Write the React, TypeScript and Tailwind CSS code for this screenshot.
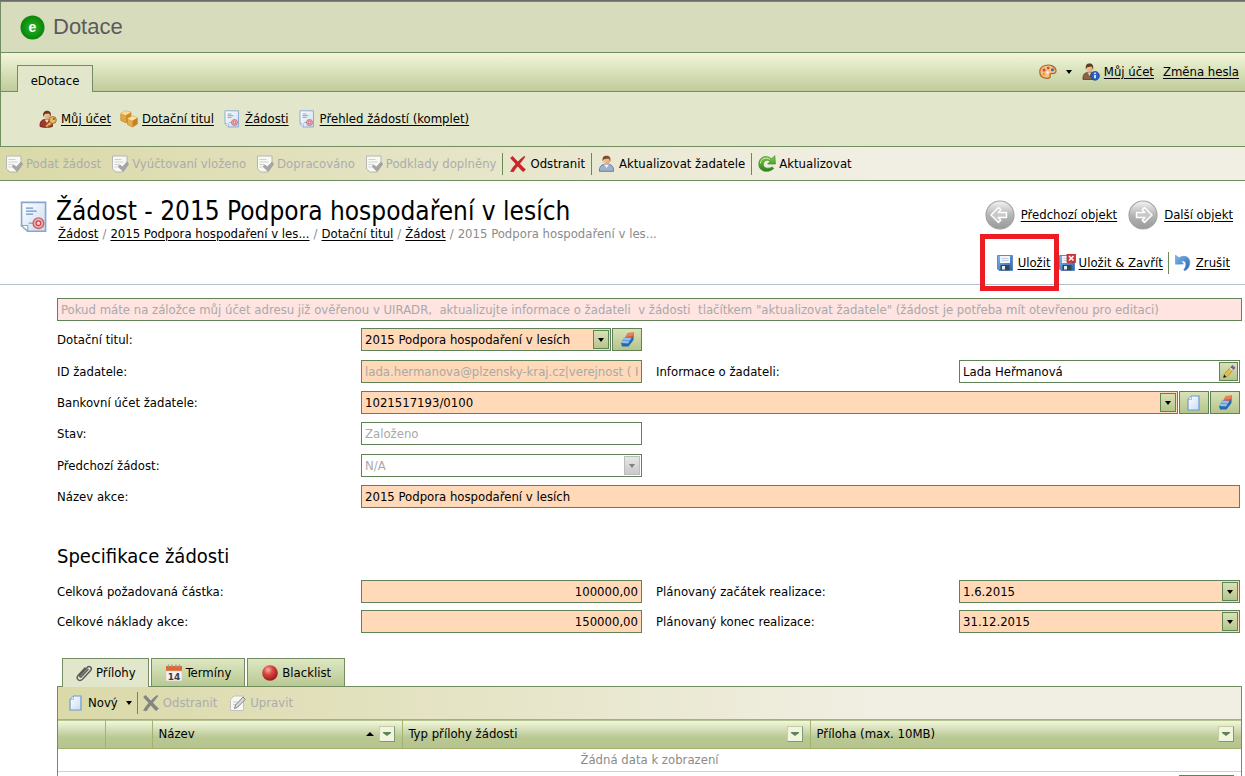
import { type ReactNode, type SelectHTMLAttributes, type InputHTMLAttributes } from "react";

type IconProps = { className?: string };

function Svg({ size = 18, box = 18, className = "", children }: { size?: number; box?: number; className?: string; children: ReactNode }) {
    return (
        <svg width={size} height={size} viewBox={`0 0 ${box} ${box}`} className={`shrink-0 ${className}`} fill="none" aria-hidden="true">
            {children}
        </svg>
    );
}

// gradients shared by all icons
function IconDefs() {
    return (
        <svg width="0" height="0" className="absolute" aria-hidden="true">
            <defs>
                <radialGradient id="logo" cx="50%" cy="50%" r="50%">
                    <stop offset="0" stopColor="#2bb32b" />
                    <stop offset="1" stopColor="#068606" />
                </radialGradient>
                <linearGradient id="page" x1="0" y1="0" x2="1" y2="1">
                    <stop offset="0" stopColor="#ffffff" />
                    <stop offset="1" stopColor="#c9dcf0" />
                </linearGradient>
                <linearGradient id="silver" x1="0" y1="0" x2="0" y2="1">
                    <stop offset="0" stopColor="#f4f4f4" />
                    <stop offset="0.5" stopColor="#b5b5b5" />
                    <stop offset="1" stopColor="#9a9a9a" />
                </linearGradient>
                <radialGradient id="ball" cx="38%" cy="30%" r="65%">
                    <stop offset="0" stopColor="#f9b0a6" />
                    <stop offset="0.45" stopColor="#d94a43" />
                    <stop offset="1" stopColor="#a51d22" />
                </radialGradient>
                <linearGradient id="leaf" x1="0" y1="0" x2="0" y2="1">
                    <stop offset="0" stopColor="#7fd04a" />
                    <stop offset="1" stopColor="#2f7d1c" />
                </linearGradient>
                <linearGradient id="sky" x1="0" y1="0" x2="1" y2="1">
                    <stop offset="0" stopColor="#7db8ef" />
                    <stop offset="1" stopColor="#2a62ad" />
                </linearGradient>
                <linearGradient id="skin" x1="0" y1="0" x2="1" y2="1">
                    <stop offset="0" stopColor="#fbe0c0" />
                    <stop offset="1" stopColor="#d69a62" />
                </linearGradient>
            </defs>
        </svg>
    );
}

function UserKeyIcon() {
    return (
        <Svg>
            <path d="M1 16.500c-.4-4 1-6.200 4-7h5c2.500.8 3.500 2.500 3.500 7-3 1.200-9.500 1.200-12.500 0z" fill="#a3352b" stroke="#6e1f1a" strokeWidth=".8" />
            <path d="M5.500 9.500 8 13l2-3.500z" fill="#f2dcc4" />
            <ellipse cx="8" cy="5.500" rx="3.200" ry="4" fill="url(#skin)" />
            <path d="M4.300 7C3.500 3 5 .7 8 .7c3.300 0 4.500 2.200 3.700 6-.6-1.500-.7-2.700-2.200-3.200-2 .2-3.600.3-4.200 1.200z" fill="#6d3520" />
            <path d="m11.500 11-5 4.700.6 1.500h2l.3-1.500h1.400l2.800-2.700" fill="#e8b45a" stroke="#8d5c18" strokeWidth=".7" />
            <circle cx="13.800" cy="10" r="3.500" fill="#eabb62" stroke="#8d5c18" strokeWidth=".8" />
            <circle cx="14.800" cy="9" r="1.100" fill="#8d5c18" />
        </Svg>
    );
}

function BoxesIcon() {
    return (
        <Svg>
            <path d="M.8 3.500 5.500.8l5.500 1.700v6.800L6 13 .8 10.500z" fill="#e3a544" stroke="#c08a3c" strokeWidth=".7" strokeLinejoin="round" />
            <path d="M.8 3.500 5.500.8l5.500 1.700-5 2.800z" fill="#fbdc98" />
            <path d="M6 5.300 11 2.500v6.800L6 13z" fill="#cf8c2f" />
            <path d="m7.500 8.500 5-2.500 4.800 2v6L12.500 17l-5-2.500z" fill="#e7ac4c" stroke="#c08a3c" strokeWidth=".7" strokeLinejoin="round" />
            <path d="M7.500 8.500 12.500 6l4.800 2-4.800 2.800z" fill="#fde2a4" />
            <path d="M12.500 10.800 17.300 8v6l-4.800 3z" fill="#c68026" />
        </Svg>
    );
}

function CertificateIcon({ size = 18 }: { size?: number }) {
    return (
        <Svg size={size}>
            <path d="M2 .800h13.500v16.200H5.500L2 13.800z" fill="url(#page)" stroke="#86a6ce" strokeWidth=".9" />
            <path d="M2 13.800h3.500V17z" fill="#fff" stroke="#86a6ce" strokeWidth=".6" />
            <path d="M4.500 4h4M4.500 5.700h6M4.500 7.400h4" stroke="#6f94c8" strokeWidth=".8" />
            <path d="M6 12.500h3.500" stroke="#8fa9cc" strokeWidth=".8" />
            <circle cx="11.500" cy="12.500" r="3" fill="#ecb0b3" stroke="#cf6168" strokeWidth=".8" />
            <circle cx="11.500" cy="12.500" r="1.300" fill="#f6dada" stroke="#c84850" strokeWidth=".7" />
        </Svg>
    );
}

function DocCheckIcon() {
    return (
        <Svg>
            <path d="M1.500 1h14.500v10l-4 6H5l-3.500-3z" fill="#f8f8f5" stroke="#b6b6b2" strokeWidth="1" />
            <path d="M3.500 4.500h7M3.500 7h9M3.500 9.500h5M3.500 12h3" stroke="#d0d0cd" strokeWidth="1" />
            <path d="m7 11.500 2-1.500 2.300 2L16 7l1.500 2.300-5.500 7z" fill="#a7a7a7" stroke="#8f8f8f" strokeWidth=".6" />
        </Svg>
    );
}

function CrossIcon({ muted = false }: { muted?: boolean }) {
    return (
        <Svg>
            <path
                d="M1.500 3 3.600 1.300Q6.500 4.800 9 7q3-3.600 6.300-5.700L16 2q-2.600 3.100-5.300 6.800 2.700 3.200 5.800 5.700L14 16.700Q11 13.700 8.700 11q-2.600 3-4.200 5.700L1.500 16.500Q3.700 12.200 6.900 8.900 4 6 1.500 3z"
                fill={muted ? "#858585" : "#cf232a"}
                stroke={muted ? "#777" : "#a3151b"}
                strokeWidth=".5"
            />
        </Svg>
    );
}

function PersonIcon() {
    return (
        <Svg>
            <path d="M1.500 16.300c-.3-4 1.200-6.300 5-7h4c3.800.7 5.300 3 5 7z" fill="#9db1cc" stroke="#5d7497" strokeWidth=".9" />
            <path d="M6 9.500 8.500 13 11 9.500z" fill="#f0f3f8" />
            <ellipse cx="8.500" cy="5.600" rx="3.300" ry="4" fill="url(#skin)" />
            <path d="M4.700 6.500C4 2.500 5.500.8 8.500.8s4.500 1.700 3.800 5.700c-.8-1-.8-2.500-1.800-3-2 .5-4.300.3-5 1.200z" fill="#7d4c2a" />
        </Svg>
    );
}

function UserInfoIcon() {
    return (
        <Svg>
            <path d="M1 16.500c-.3-4.300 1-6.500 4.500-7h4c3 .5 4 3 4 7z" fill="#8a6442" stroke="#5c3f27" strokeWidth=".8" />
            <path d="M5.500 9.500 7.500 13l2-3.500z" fill="#e3cdb3" />
            <ellipse cx="7.500" cy="5.500" rx="3.200" ry="4" fill="url(#skin)" />
            <path d="M3.900 6.500C3.200 2.500 4.700.6 7.500.6s4.300 1.900 3.600 5.900c-.8-1-.8-2.500-1.600-3-2 .5-4 .3-4.700 1.200z" fill="#5f3b22" />
            <circle cx="13" cy="12.800" r="4.400" fill="#2860c4" stroke="#153f8f" strokeWidth=".7" />
            <path d="M13 12v3.200" stroke="#fff" strokeWidth="1.600" />
            <circle cx="13" cy="10.300" r=".9" fill="#fff" />
        </Svg>
    );
}

function RefreshIcon() {
    return (
        <Svg>
            <path d="M13.500 3.800 16.800.8l.6 8.200h-7.800l2.600-2.800C9 3.800 5.300 5.800 5.300 9.400c0 3.700 4.600 4.900 8.900 2.600l1.600 1.400C10.500 18.600.8 16.800.8 9.300.8 1.700 8.500-.7 13.500 3.800z" fill="url(#leaf)" stroke="#3d8a2c" strokeWidth=".7" />
            <path d="M2.300 8.500C3 3.500 8 1.500 12 4.500" stroke="#c9efae" strokeWidth="1" />
        </Svg>
    );
}

function PaletteIcon() {
    return (
        <Svg>
            <path d="M6 2.500c5-1.500 10.500.8 11 5 .3 2.500-1.800 3.300-3.800 3-2-.2-2.500.8-2 2.200.5 1.800-1 2.800-3.500 2.600C3.300 15 .8 12.500.8 9c0-3 2-5.600 5.200-6.500z" fill="#f5c085" stroke="#ad6526" strokeWidth="1.200" />
            <circle cx="5" cy="7" r="1.500" fill="#d8432e" />
            <circle cx="9.200" cy="5" r="1.300" fill="#d8432e" />
            <circle cx="13.500" cy="6.800" r="1.500" fill="#3465c4" />
            <circle cx="4.800" cy="11" r="1.300" fill="#e7962b" />
            <circle cx="8.600" cy="9.500" r="1.200" fill="#fff4e2" />
        </Svg>
    );
}

function ArrowCircleIcon({ next = false }: { next?: boolean }) {
    return (
        <Svg size={32} box={32}>
            <circle cx="16" cy="16" r="14" fill="url(#silver)" stroke="#a4a4a4" strokeWidth="1.200" />
            <path
                d={next ? "M17.500 8.500 25 16l-7.500 7.500-2.300-2.300 2.500-2.700H9.500v-5h8.200l-2.500-2.700z" : "M14.500 8.500 7 16l7.500 7.500 2.300-2.300-2.500-2.700h8.200v-5h-8.200l2.500-2.700z"}
                fill="#c9c9c9"
                stroke="#fff"
                strokeWidth="1.500"
                strokeLinejoin="round"
            />
        </Svg>
    );
}

function FloppyIcon({ closing = false }: { closing?: boolean }) {
    return (
        <Svg>
            <path d="M1.500 1.500h15v15H3L1.500 15z" fill="url(#sky)" stroke="#5585bd" strokeWidth=".9" />
            <path d="M4 2h10v7H4z" fill="#f1f5fa" />
            <path d="M5.500 4.500h7M5.500 6.500h7" stroke="#b7c5d8" strokeWidth=".8" />
            <path d="M4.500 11h9v5.300h-9z" fill="#39424f" />
            <path d="M6 12h3v3.500H6z" fill="#e8edf3" />
            {closing && (
                <>
                    <path d="M9 0h8.500v8.500H9z" fill="#d2383a" stroke="#a82226" strokeWidth=".7" />
                    <path d="m11 2 4.500 4.500m0-4.500L11 6.500" stroke="#fff" strokeWidth="1.500" />
                </>
            )}
        </Svg>
    );
}

function UndoIcon() {
    return (
        <Svg>
            <path d="M1.500 1.200 5 3.800C11 .5 15.800 3 15.800 8.500c0 3.500-1.500 6.300-4.800 8.300l-1.300-.8c2-3 2.600-5.500 1.800-7.300C10.700 7 9.200 6.800 7.300 7.300L9.500 10l-8 .2z" fill="url(#sky)" stroke="#5b94d4" strokeWidth=".6" />
        </Svg>
    );
}

function EraserIcon() {
    return (
        <Svg>
            <path d="m8 5 1.800-3 6.200-.5-.5 4.500-2 3.500L7 7z" fill="#dd5a34" />
            <path d="M9.800 2 16 1.500 14 5l-6 .5z" fill="#e9825c" />
            <path d="m6.500 6.500 7 .5 2-2v4l-5 6.500H4L3 12z" fill="#2a66b0" />
            <path d="m6.500 6.500 7 .5-3.500 5.500-7-.5z" fill="#8cc3ee" />
            <path d="m5 9.300 7 .5" stroke="#4d90d0" strokeWidth=".8" />
        </Svg>
    );
}

function NewDocIcon() {
    return (
        <Svg>
            <path d="M6.500 2H14v14H3V5.500z" fill="url(#page)" stroke="#6b9bd1" strokeWidth="1.200" />
            <path d="M6.500 2v3.500H3z" fill="#fff" stroke="#86aedb" strokeWidth=".8" />
        </Svg>
    );
}

function PencilIcon() {
    return (
        <Svg size={14}>
            <path d="m3 12 8.500-9.500 3.500 3L6.500 15 2 16.500z" fill="#e6bf4a" stroke="#8a6d20" strokeWidth=".7" />
            <path d="m11.500 2.500 2-1.800 3.300 2.800-1.800 2z" fill="#7e59b5" stroke="#523285" strokeWidth=".6" />
            <path d="m10.500 3.700 3.300 3" stroke="#dbe1ea" strokeWidth="1.500" />
            <path d="m3 12.500-1.500 4 4-1.500z" fill="#111" />
        </Svg>
    );
}

function PaperclipIcon() {
    return (
        <Svg>
            <path
                d="M13 5.500 6.300 12.700c-.8.9-2.200-.2-1.300-1.300l7.300-8c2-2 5.300.4 3.500 2.900l-8.300 9C4.500 18 .5 15 3 11.600L10 4"
                stroke="#5c5c5c"
                strokeWidth="1.500"
                strokeLinecap="round"
            />
        </Svg>
    );
}

function CalendarIcon() {
    return (
        <Svg>
            <path d="M1 2h16v5H1z" fill="#e0672c" />
            <path d="M1 7h16v10H1z" fill="#f3f3f3" stroke="#c9c9c9" strokeWidth=".6" />
            <path d="M3.500.5v3M7 .5v3M11 .5v3M14.500.5v3" stroke="#9b9b9b" strokeWidth="1.300" />
            <text x="9" y="16" textAnchor="middle" fontSize="9" fontWeight="bold" fontFamily="DejaVu Sans, sans-serif" fill="#3d3d3d">14</text>
        </Svg>
    );
}

function BallIcon() {
    return (
        <Svg>
            <circle cx="9" cy="9" r="7.800" fill="url(#ball)" />
        </Svg>
    );
}

function EditDocIcon() {
    return (
        <Svg>
            <path d="M5 2h9.500v14.500h-13V5.500z" fill="#f7f7f4" stroke="#c2c2be" strokeWidth="1" />
            <path d="M4 8h5M4 10.500h3" stroke="#d0d0cd" strokeWidth="1" />
            <path d="m6.500 11 7.500-8 2.300 2.300-7.800 8-3 1.200z" fill="#d8d8d8" stroke="#7c7c7c" strokeWidth=".9" />
        </Svg>
    );
}

function Caret({ up = false, className = "text-black" }: IconProps & { up?: boolean }) {
    return (
        <svg width="8" height="4" viewBox="0 0 8 4" className={`shrink-0 ${className}`} aria-hidden="true">
            <path d={up ? "M0 4h8L4 0z" : "M1 0h6L4 4z"} fill="currentColor" />
        </svg>
    );
}

function TextLink({ children, icon, className = "gap-1" }: { children: ReactNode; icon?: ReactNode; className?: string }) {
    return (
        <a href="#" className={`flex items-center whitespace-nowrap ${className}`}>
            {icon}
            <span className="underline underline-offset-2">{children}</span>
        </a>
    );
}

function ToolButton({ icon, children, disabled }: { icon: ReactNode; children: ReactNode; disabled?: boolean }) {
    return (
        <button type="button" disabled={disabled} className="flex items-center gap-[3px] whitespace-nowrap disabled:text-[#acacac]">
            {icon}
            {children}
        </button>
    );
}

function Divider() {
    return <span className="h-[22px] w-px bg-[#6a8a5a]" />;
}

function IconButton({ label, children }: { label: string; children: ReactNode }) {
    return (
        <button type="button" aria-label={label} className="flex h-[23px] w-[30px] shrink-0 items-center justify-center border border-[#5f8257] bg-linear-to-b from-[#d8e2b4] to-[#b5c58d]">
            {children}
        </button>
    );
}

function TextField({ className = "bg-[#ffd9b8]", ...props }: InputHTMLAttributes<HTMLInputElement>) {
    return <input type="text" className={`h-[23px] w-full min-w-0 border border-[#5f8257] px-[3px] outline-none disabled:text-[#a9a9a9] ${className}`} {...props} />;
}

function SelectField({ className = "bg-[#ffd9b8]", disabled, value, ...props }: SelectHTMLAttributes<HTMLSelectElement> & { value: string }) {
    return (
        <div className={`flex h-[23px] w-full min-w-0 border border-[#5f8257] p-px ${className}`}>
            <select defaultValue={value} disabled={disabled} className="min-w-0 flex-1 appearance-none bg-transparent px-[2px] opacity-100 outline-none disabled:text-[#a9a9a9]" {...props}>
                <option>{value}</option>
            </select>
            {disabled ? (
                <span className="flex w-4 items-center justify-center border border-[#bdbdbd] bg-linear-to-b from-[#e6e6e6] to-[#c9c9c9]">
                    <Caret className="text-[#808080]" />
                </span>
            ) : (
                <span className="flex w-4 items-center justify-center border border-[#5f8257] bg-linear-to-b from-[#d8e2b4] to-[#b5c58d]">
                    <Caret />
                </span>
            )}
        </div>
    );
}

function DateField({ id, value }: { id: string; value: string }) {
    return (
        <div className="flex h-[23px] w-full min-w-0 border border-[#5f8257] bg-[#ffd9b8] p-px">
            <input id={id} type="text" defaultValue={value} className="min-w-0 flex-1 px-[2px] outline-none" />
            <button type="button" aria-label="Vybrat datum" className="flex w-4 items-center justify-center border border-[#5f8257] bg-linear-to-b from-[#d8e2b4] to-[#b5c58d]">
                <Caret />
            </button>
        </div>
    );
}

function Row({ children }: { children: ReactNode }) {
    return <div className="grid grid-cols-[304px_1fr_317px_1fr] items-center">{children}</div>;
}

function Label({ htmlFor, second, children }: { htmlFor: string; second?: boolean; children: ReactNode }) {
    return (
        <label htmlFor={htmlFor} className={second ? "pl-[14px]" : ""}>
            {children}
        </label>
    );
}

function FilterButton({ column }: { column: string }) {
    return (
        <button type="button" aria-label={`Filtr: ${column}`} className="flex size-4 shrink-0 items-center justify-center border border-[#c3d0a6] border-r-[#7d9a72] border-b-[#7d9a72] bg-[#f1f5de]">
            <svg width="8" height="4" viewBox="0 0 8 4" aria-hidden="true">
                <path d="M0 0h8v1L4 4 0 1z" fill="#5f8257" />
            </svg>
        </button>
    );
}

function HeaderCell({ title, sorted }: { title: string; sorted?: boolean }) {
    return (
        <th className="border-r border-[#a3b26c] p-0 pr-[7px] pl-[6px] text-left font-normal last:border-r-0">
            <div className="flex items-center gap-[5px]">
                <span className="flex-1">{title}</span>
                {sorted && <Caret up />}
                <FilterButton column={title} />
            </div>
        </th>
    );
}

const workflow = ["Podat žádost", "Vyúčtovaní vloženo", "Dopracováno", "Podklady doplněny"];

export default function App() {
    return (
        <div className="flex min-h-screen flex-col overflow-hidden bg-white font-['DejaVu_Sans_Condensed','DejaVu_Sans',sans-serif] text-[13px] leading-4 text-black">
            <IconDefs />

            <header className="border-t border-[#6b6b6b]">
                <div className="border-y border-l border-[#728d5f] bg-[#d7dcbc]">
                    <div className="flex h-[50px] items-center gap-2 pl-[19px] font-['Liberation_Sans',Arial,sans-serif]">
                        <svg width="25" height="25" viewBox="0 0 25 25" aria-hidden="true">
                            <circle cx="12.500" cy="12.500" r="12" fill="url(#logo)" />
                            <text x="12.500" y="16.500" textAnchor="middle" fontSize="14" fontWeight="bold" fill="#fff">e</text>
                        </svg>
                        <span className="text-[22px] leading-6 text-[#5b5b5f]">Dotace</span>
                    </div>
                </div>

                <div className="flex h-[38px] items-end justify-between border-l border-[#728d5f] bg-linear-to-b from-[#f2f6dc] to-[#bfcc99] pr-[6px] pl-4">
                    <div role="tablist" className="relative -mb-px">
                        <button type="button" role="tab" aria-selected="true" className="h-[27px] w-[76px] border border-b-0 border-[#728d5f] bg-[#e2e7cb] pt-1">
                            eDotace
                        </button>
                    </div>
                    <div className="flex items-center gap-[9px] pb-[10px]">
                        <button type="button" aria-label="Vzhled" className="flex items-center gap-2">
                            <PaletteIcon />
                            <Caret />
                        </button>
                        <TextLink icon={<UserInfoIcon />}>Můj účet</TextLink>
                        <TextLink>Změna hesla</TextLink>
                    </div>
                </div>

                <nav className="flex h-14 items-center gap-[9px] border-y border-l border-[#728d5f] bg-[#e2e7cb] pl-[38px]">
                    <TextLink icon={<UserKeyIcon />}>Můj účet</TextLink>
                    <TextLink icon={<BoxesIcon />}>Dotační titul</TextLink>
                    <TextLink icon={<CertificateIcon />}>Žádosti</TextLink>
                    <TextLink icon={<CertificateIcon />}>Přehled žádostí (komplet)</TextLink>
                </nav>
            </header>

            <div role="toolbar" className="flex h-[34px] items-center gap-[6px] border-b border-[#728d5f] bg-linear-to-r from-[#dad9a8] to-[#f1efe3] to-70% pl-[5px]">
                <div className="flex gap-[10px]">
                    {workflow.map((step) => (
                        <ToolButton key={step} icon={<DocCheckIcon />} disabled>
                            {step}
                        </ToolButton>
                    ))}
                </div>
                <Divider />
                <ToolButton icon={<CrossIcon />}>Odstranit</ToolButton>
                <Divider />
                <ToolButton icon={<PersonIcon />}>Aktualizovat žadatele</ToolButton>
                <Divider />
                <ToolButton icon={<RefreshIcon />}>Aktualizovat</ToolButton>
            </div>

            <section className="flex h-[104px] items-start border-b border-[#b4bfcc] pl-[18px]">
                <div className="pt-5">
                    <CertificateIcon size={32} />
                </div>
                <div className="flex-1 pt-[15px] pl-[6px]">
                    <h1 className="text-[26px] leading-[30px]">Žádost - 2015 Podpora hospodaření v lesích</h1>
                    <div className="flex gap-1 pl-[2px] text-[#8b8b8b]">
                        <a href="#" className="text-black underline underline-offset-2">Žádost</a>/
                        <a href="#" className="text-black underline underline-offset-2">2015 Podpora hospodaření v les...</a>/
                        <a href="#" className="text-black underline underline-offset-2">Dotační titul</a>/
                        <a href="#" className="text-black underline underline-offset-2">Žádost</a>/
                        <span>2015 Podpora hospodaření v les...</span>
                    </div>
                </div>
                <div className="flex flex-col items-end pt-[18px]">
                    <div className="flex gap-[10px] pr-3">
                        <TextLink icon={<ArrowCircleIcon />} className="gap-[5px]">Předchozí objekt</TextLink>
                        <TextLink icon={<ArrowCircleIcon next />} className="gap-[5px]">Další objekt</TextLink>
                    </div>
                    <div className="flex items-center gap-[5px] pt-[21px] pr-[15px]">
                        <div className="relative pr-[2px]">
                            <TextLink icon={<FloppyIcon />}>Uložit</TextLink>
                            <span className="pointer-events-none absolute -top-5 -right-[6px] -bottom-[19px] -left-4 border-[5px] border-[#ed1c24]" />
                        </div>
                        <TextLink icon={<FloppyIcon closing />} className="gap-[3px]">Uložit &amp; Zavřít</TextLink>
                        <Divider />
                        <TextLink icon={<UndoIcon />}>Zrušit</TextLink>
                    </div>
                </div>
            </section>

            <main className="flex flex-1 flex-col pt-[13px] pr-[3px] pl-[57px]">
                <TextField
                    aria-label="Upozornění"
                    disabled
                    className="bg-[#ffe4e1]"
                    defaultValue={'Pokud máte na záložce můj účet adresu již ověřenou v UIRADR,  aktualizujte informace o žadateli  v žádosti  tlačítkem "aktualizovat žadatele" (žádost je potřeba mít otevřenou pro editaci)'}
                />

                <form className="flex flex-col gap-[9px] pt-[7px] pr-[2px]">
                    <Row>
                        <Label htmlFor="titul">Dotační titul:</Label>
                        <div className="flex gap-px">
                            <SelectField id="titul" value="2015 Podpora hospodaření v lesích" />
                            <IconButton label="Vymazat titul">
                                <EraserIcon />
                            </IconButton>
                        </div>
                    </Row>

                    <div className="flex flex-col gap-2">
                        <Row>
                            <Label htmlFor="zadatel">ID žadatele:</Label>
                            <TextField id="zadatel" disabled defaultValue="lada.hermanova@plzensky-kraj.cz|verejnost ( Heřmanová )" />
                            <Label htmlFor="info" second>Informace o žadateli:</Label>
                            <div className="flex h-[23px] border border-[#5f8257] p-px">
                                <input id="info" type="text" defaultValue="Lada Heřmanová" className="min-w-0 flex-1 px-[2px] outline-none" />
                                <button type="button" aria-label="Upravit žadatele" className="flex w-[19px] items-center justify-center border border-[#5f8257] bg-linear-to-b from-[#d8e2b4] to-[#b5c58d]">
                                    <PencilIcon />
                                </button>
                            </div>
                        </Row>
                        <Row>
                            <Label htmlFor="ucet">Bankovní účet žadatele:</Label>
                            <div className="col-span-3 flex gap-px">
                                <SelectField id="ucet" value="1021517193/0100" />
                                <IconButton label="Nový účet">
                                    <NewDocIcon />
                                </IconButton>
                                <IconButton label="Vymazat účet">
                                    <EraserIcon />
                                </IconButton>
                            </div>
                        </Row>
                        <Row>
                            <Label htmlFor="stav">Stav:</Label>
                            <TextField id="stav" disabled className="bg-white" defaultValue="Založeno" />
                        </Row>
                    </div>

                    <div className="flex flex-col gap-2">
                        <Row>
                            <Label htmlFor="predchozi">Předchozí žádost:</Label>
                            <SelectField id="predchozi" disabled className="bg-white" value="N/A" />
                        </Row>
                        <Row>
                            <Label htmlFor="nazev">Název akce:</Label>
                            <div className="col-span-3">
                                <TextField id="nazev" defaultValue="2015 Podpora hospodaření v lesích" />
                            </div>
                        </Row>
                    </div>

                    <section aria-labelledby="specifikace" className="pt-[27px]">
                        <h2 id="specifikace" className="text-[20px] leading-6">Specifikace žádosti</h2>
                        <div className="flex flex-col gap-[7px] pt-3">
                            <Row>
                                <Label htmlFor="castka">Celková požadovaná částka:</Label>
                                <TextField id="castka" className="bg-[#ffd9b8] text-right" defaultValue="100000,00" />
                                <Label htmlFor="zacatek" second>Plánovaný začátek realizace:</Label>
                                <DateField id="zacatek" value="1.6.2015" />
                            </Row>
                            <Row>
                                <Label htmlFor="naklady">Celkové náklady akce:</Label>
                                <TextField id="naklady" className="bg-[#ffd9b8] text-right" defaultValue="150000,00" />
                                <Label htmlFor="konec" second>Plánovaný konec realizace:</Label>
                                <DateField id="konec" value="31.12.2015" />
                            </Row>
                        </div>
                    </section>
                </form>

                <div role="tablist" className="relative -mb-px flex items-end gap-[2px] pt-[25px] pl-[5px]">
                    <button type="button" role="tab" aria-selected="true" className="flex h-[29px] items-center gap-[3px] border border-b-0 border-[#728d5f] bg-[#e2e7cb] px-3">
                        <PaperclipIcon />
                        Přílohy
                    </button>
                    <button type="button" role="tab" aria-selected="false" className="flex h-[29px] items-center gap-[3px] border border-[#728d5f] bg-linear-to-b from-[#dfe7c3] to-[#b9c892] px-[13px]">
                        <CalendarIcon />
                        Termíny
                    </button>
                    <button type="button" role="tab" aria-selected="false" className="flex h-[29px] items-center gap-[3px] border border-[#728d5f] bg-linear-to-b from-[#dfe7c3] to-[#b9c892] px-[13px]">
                        <BallIcon />
                        Blacklist
                    </button>
                </div>

                <div role="tabpanel" className="flex flex-1 flex-col border border-b-0 border-[#728d5f]">
                    <div role="toolbar" className="flex h-8 items-center gap-1 bg-linear-to-r from-[#dad9a8] to-[#f1efe3] to-70% pl-[9px]">
                        <button type="button" className="flex items-center gap-[3px]">
                            <NewDocIcon />
                            Nový
                            <span className="pl-1"><Caret /></span>
                        </button>
                        <Divider />
                        <div className="flex gap-3">
                            <ToolButton icon={<CrossIcon muted />} disabled>Odstranit</ToolButton>
                            <ToolButton icon={<EditDocIcon />} disabled>Upravit</ToolButton>
                        </div>
                    </div>
                    <table className="w-full table-fixed border-collapse">
                        <colgroup>
                            <col className="w-[47px]" />
                            <col className="w-[47px]" />
                            <col className="w-[250px]" />
                            <col className="w-[408px]" />
                            <col />
                        </colgroup>
                        <thead>
                            <tr className="h-[29px] border-y border-[#a3b26c] bg-linear-to-b from-[#f2f6dc] via-[#bac994] via-60% to-[#b5c48e]">
                                <th className="border-r border-[#a3b26c]" />
                                <th className="border-r border-[#a3b26c]" />
                                <HeaderCell title="Název" sorted />
                                <HeaderCell title="Typ přílohy žádosti" />
                                <HeaderCell title="Příloha (max. 10MB)" />
                            </tr>
                        </thead>
                        <tbody>
                            <tr className="h-[23px] border-b border-[#cfd6b4] text-center text-[#8b8b8b]">
                                <td colSpan={5} className="p-0">Žádná data k zobrazení</td>
                            </tr>
                        </tbody>
                    </table>
                    <div className="mt-auto mr-[7px] ml-auto h-px w-[55px] bg-[#5f8257]" />
                </div>
            </main>
        </div>
    );
}
